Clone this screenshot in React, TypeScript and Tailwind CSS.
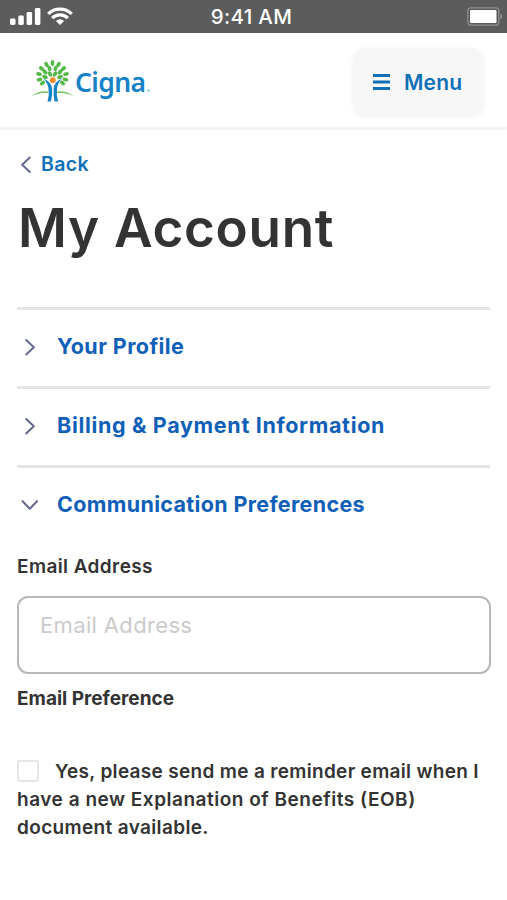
import { useState } from 'react'

type Leaf = { x: number; y: number; r: number }

const LEAVES: Leaf[] = [
  { x: 21.5, y: 3, r: 0 },
  { x: 15.5, y: 4.5, r: -25 },
  { x: 27.5, y: 4.5, r: 25 },
  { x: 10.5, y: 8.5, r: -50 },
  { x: 32.5, y: 8.5, r: 50 },
  { x: 18.5, y: 8.5, r: -15 },
  { x: 24.5, y: 8.5, r: 15 },
  { x: 8, y: 14, r: -75 },
  { x: 35, y: 14, r: 75 },
  { x: 14, y: 12, r: -40 },
  { x: 29, y: 12, r: 40 },
  { x: 19, y: 14, r: -30 },
  { x: 24, y: 14, r: 30 },
  { x: 8.5, y: 19.5, r: -105 },
  { x: 34.5, y: 19.5, r: 105 },
  { x: 14, y: 17, r: -70 },
  { x: 29, y: 17, r: 70 },
  { x: 11.5, y: 23, r: -125 },
  { x: 31.5, y: 23, r: 125 },
]

function StatusBar() {
  return (
    <div className="flex h-[33px] items-center justify-between bg-[#5c5c5c] text-white">
      <div className="flex w-[120px] items-center gap-1.5 pl-[9px]">
        <svg width="32" height="18" viewBox="0 0 32 18" fill="currentColor" aria-hidden="true">
          <rect x="1" y="10.5" width="5.5" height="6.5" rx="1.4" />
          <rect x="9.3" y="7.5" width="5.5" height="9.5" rx="1.4" />
          <rect x="17.6" y="4" width="5.5" height="13" rx="1.4" />
          <rect x="25.9" y="0" width="5.5" height="17" rx="1.4" />
        </svg>
        <svg
          width="26"
          height="19"
          viewBox="0 0 26 19"
          fill="none"
          stroke="currentColor"
          strokeWidth="3.2"
          aria-hidden="true"
        >
          <path d="M1.2 6.8a17 17 0 0 1 23.6 0" />
          <path d="M5.2 11.2a11 11 0 0 1 15.6 0" />
          <path d="M13 18l-4-4a5.7 5.7 0 0 1 8 0z" fill="currentColor" stroke="none" />
        </svg>
      </div>
      <span className="-ml-1 pt-0.5 text-[20.5px] font-medium tracking-[0.3px]">9:41 AM</span>
      <div className="flex w-[120px] justify-end pr-[4px]">
        <svg width="36" height="19" viewBox="0 0 36 19" aria-hidden="true">
          <rect x="0.8" y="0.8" width="31" height="17.4" rx="3" fill="none" stroke="#8e8e8e" strokeWidth="1.3" />
          <rect x="3" y="3" width="26.5" height="13" rx="1" fill="#fff" />
          <path d="M33.5 6.5c2 .8 2 5.2 0 6z" fill="#9b9b9b" />
        </svg>
      </div>
    </div>
  )
}

function Logo() {
  return (
    <a href="#" aria-label="Cigna" className="flex items-start">
      <svg width="44" height="44" viewBox="0 0 44 44" aria-hidden="true">
        <g fill="#55b848">
          {LEAVES.map(({ x, y, r }) => (
            <ellipse key={`${x}-${y}`} cx={x} cy={y} rx="1.9" ry="2.9" transform={`rotate(${r} ${x} ${y})`} />
          ))}
        </g>
        <path d="M0 36.5Q8 30 17 31.5v1.6Q8 32 0 36.5z" fill="#7cc36a" />
        <path d="M43 36.5Q35 30 25.5 31.5v1.6Q35 32 43 36.5z" fill="#7cc36a" />
        <path d="M12.5 18.5Q20.5 22 21 29q.3 7-1 12.500H16.5Q18.5 35 17.5 28.5 16.8 23 12.5 18.5z" fill="#1583c5" />
        <path d="M31 18.5Q23 22 22.6 29q-.3 7 1 12.500h3.5Q25 35 26 28.5 26.7 23 31 18.5z" fill="#1583c5" />
        <circle cx="21.8" cy="20.2" r="2.9" fill="#f58a2c" />
      </svg>
      <span className="font-['Noto_Sans',sans-serif] text-[26.5px] leading-[44px] font-semibold tracking-[-0.6px] text-[#1583c5]">
        Cigna
      </span>
      <span className="mt-[29px] ml-0.5 h-[3px] w-[3px] rounded-full bg-[#a9d5f2]" />
    </a>
  )
}

function Chevron({ className }: { className?: string }) {
  return (
    <svg
      width="12"
      height="18"
      viewBox="0 0 12 18"
      fill="none"
      stroke="#676b8f"
      strokeWidth="2.1"
      strokeLinecap="round"
      strokeLinejoin="round"
      className={className}
      aria-hidden="true"
    >
      <path d="M2.2 2L9.800 9.2 2.200 16.4" />
    </svg>
  )
}

type SectionProps = {
  title: string
  open: boolean
  onToggle: () => void
  titleClass: string
}

function SectionHeader({ title, open, onToggle, titleClass }: SectionProps) {
  return (
    <button
      type="button"
      onClick={onToggle}
      aria-expanded={open}
      className="flex h-[79px] w-full items-center border-t-[3px] border-[#e4e4e4] pb-0.5 text-left"
    >
      <span className="flex w-[26px] justify-center">
        <Chevron className={open ? 'rotate-90' : ''} />
      </span>
      <span className={`ml-3.5 pb-0.5 text-[21.5px] font-bold whitespace-nowrap text-[#1060b8] ${titleClass}`}>
        {title}
      </span>
    </button>
  )
}

export default function App() {
  const [openSection, setOpenSection] = useState('communication')
  const [checked, setChecked] = useState(false)

  const toggle = (id: string) => setOpenSection((current) => (current === id ? '' : id))

  return (
    <div className="h-[900px] w-[507px] overflow-hidden bg-white font-['Inter',sans-serif] text-[#333]">
      <StatusBar />

      <header className="flex h-[96px] items-start justify-between border-b-2 border-[#f3f3f3] pr-[23px] pl-[31px] shadow-[0_1px_3px_rgba(0,0,0,0.04)]">
        <div className="pt-[27px]">
          <Logo />
        </div>
        <button
          type="button"
          className="mt-[15px] flex h-[68px] w-[131px] items-center rounded-[12px] bg-[#f7f7f7] pl-5 text-[#0f70b7] shadow-[0_1px_5px_rgba(0,0,0,0.05)]"
        >
          <svg width="17" height="16" viewBox="0 0 17 16" fill="currentColor" aria-hidden="true">
            <path d="M0 0h17v3H0zM0 6.5h17v3H0zM0 13h17v3H0z" />
          </svg>
          <span className="ml-3.5 pt-px text-[21px] font-semibold tracking-[0.2px]">Menu</span>
        </button>
      </header>

      <main className="px-[17px]">
        <a href="#" className="mt-[22px] flex h-7 items-center pl-[3px] text-[#0f70b7]">
          <Chevron className="rotate-180" />
          <span className="ml-[9px] text-[19.5px] font-semibold tracking-[0.4px]">Back</span>
        </a>

        <h1 className="mt-[16px] pl-px text-[53px] leading-[66px] font-semibold whitespace-nowrap tracking-[0.7px]">
          My Account
        </h1>

        <div className="mt-[46px]">
          <SectionHeader
            title="Your Profile"
            titleClass="tracking-[0.41px]"
            open={openSection === 'profile'}
            onToggle={() => toggle('profile')}
          />
          <SectionHeader
            title="Billing & Payment Information"
            titleClass="tracking-[0.67px]"
            open={openSection === 'billing'}
            onToggle={() => toggle('billing')}
          />
          <SectionHeader
            title="Communication Preferences"
            titleClass="tracking-[0.34px]"
            open={openSection === 'communication'}
            onToggle={() => toggle('communication')}
          />
        </div>

        {openSection === 'communication' && (
          <form>
            <label htmlFor="email" className="mt-[9px] block text-[19px] leading-7 font-semibold tracking-[0.4px]">
              Email Address
            </label>
            <input
              id="email"
              type="email"
              placeholder="Email Address"
              className="mt-[15px] block h-[78px] w-[474px] rounded-[11px] border-2 border-[#b8b8b8] px-[21px] pb-[20px] text-[22px] tracking-[0.35px] placeholder:text-[#cbcbcb]"
            />
            <p className="mt-[11px] text-[19px] leading-7 font-bold">Email Preference</p>

            <label className="mt-[45px] block text-[19px] leading-7 font-semibold whitespace-nowrap">
              <input
                type="checkbox"
                checked={checked}
                onChange={(e) => setChecked(e.target.checked)}
                className="mr-4 inline-block h-[22px] w-[22px] appearance-none rounded-[3px] border-2 border-[#e6e6e6] align-[-4px] checked:bg-[#0f70b7]"
              />
              <span className="tracking-[0.32px]">Yes, please send me a reminder email when I</span>
              <br />
              <span className="tracking-[0.52px]">have a new Explanation of Benefits (EOB)</span>
              <br />
              <span className="tracking-[0.35px]">document available.</span>
            </label>
          </form>
        )}
      </main>
    </div>
  )
}
